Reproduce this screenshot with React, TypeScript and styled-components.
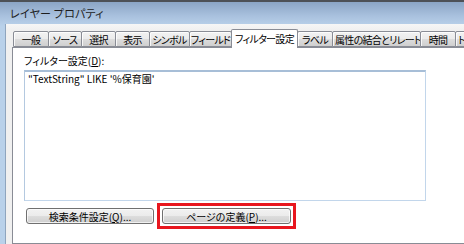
import React from 'react';
import styled, { createGlobalStyle } from 'styled-components';

const GlobalStyle = createGlobalStyle`
  html, body {
    margin: 0;
    padding: 0;
    width: 464px;
    height: 244px;
    overflow: hidden;
    background: #f0f0f0;
  }
  body {
    font-family: "Noto Sans CJK JP", "Liberation Sans", sans-serif;
    font-feature-settings: "palt" 1;
    font-size: 10px;
    color: #000;
  }
`;

// Window frame with Aero basic style title bar
const Frame = styled.div`
  width: 464px;
  height: 244px;
  box-sizing: border-box;
  border-top: 2px solid #4d5157;
  background: linear-gradient(to bottom, #8ba5c5 0px, #a9c1de 14px, #b9d1ea 24px, #b9d1ea 100%);
  display: flex;
  flex-direction: column;
  overflow: hidden;
`;

const TitleBar = styled.div`
  height: 22px;
  flex: none;
  display: flex;
  align-items: center;
  padding-left: 10px;
  font-size: 11px;
  letter-spacing: 0.2px;
  color: #1e1e1e;
`;

const Client = styled.div`
  flex: 1;
  margin-left: 5px;
  border-left: 1px solid #8fa5be;
  background: linear-gradient(to bottom, #f6f6f6 0px, #f0f0f0 6px);
  padding: 5px 0 0 6px;
  display: flex;
  flex-direction: column;
  min-width: 0;
`;

const TabStrip = styled.div`
  display: flex;
  align-items: flex-end;
  padding-left: 2px;
  position: relative;
  z-index: 1;
  white-space: nowrap;
`;

const Tab = styled.div<{ $w: number; $active?: boolean }>`
  flex: none;
  width: ${p => p.$w}px;
  box-sizing: border-box;
  height: ${p => (p.$active ? 19 : 16)}px;
  margin-left: -1px;
  margin-bottom: ${p => (p.$active ? -1 : 0)}px;
  padding: 0 2px ${p => (p.$active ? 2 : 0)}px;
  border: 1px solid #898c95;
  border-bottom: ${p => (p.$active ? 'none' : '1px solid #898c95')};
  border-radius: 2px 2px 0 0;
  background: ${p =>
    p.$active
      ? '#ffffff'
      : 'linear-gradient(to bottom, #f2f2f2 0%, #ebebeb 50%, #dddddd 51%, #cfcfcf 100%)'};
  box-shadow: inset 1px 1px 0 rgba(255, 255, 255, 0.8);
  display: flex;
  align-items: center;
  justify-content: ${p => (p.$w > 45 && !p.$active ? 'flex-start' : 'center')};
  font-size: 10px;
  letter-spacing: -0.7px;
  line-height: 13px;
  overflow: hidden;
  position: relative;
  z-index: ${p => (p.$active ? 2 : 0)};
`;

const Panel = styled.div`
  width: 480px;
  flex: 1;
  box-sizing: border-box;
  background: #ffffff;
  border: 1px solid #898c95;
  padding: 6px 0 0 11px;
  display: flex;
  flex-direction: column;
`;

const FieldLabel = styled.div`
  height: 14px;
  line-height: 14px;
  margin-bottom: 2px;
`;

const FilterBox = styled.div`
  width: 402px;
  height: 131px;
  box-sizing: border-box;
  border: 1px solid #c2d6eb;
  border-top: 2px solid #a7bed7;
  border-left-color: #b4c9e0;
  padding: 0 3px;
  line-height: 13px;
`;

const ButtonRow = styled.div`
  display: flex;
  align-items: center;
  gap: 3px;
  margin-top: 2px;
  padding-left: 2px;
`;

const Highlight = styled.div`
  border: 3px solid #e8161e;
  padding: 2px;
  display: flex;
`;

const Button = styled.div<{ $w: number }>`
  width: ${p => p.$w}px;
  height: 16px;
  box-sizing: border-box;
  border: 1px solid #707070;
  border-radius: 3px;
  background: linear-gradient(to bottom, #f2f2f2 0%, #ebebeb 50%, #dddddd 51%, #cfcfcf 100%);
  box-shadow: inset 0 0 0 1px rgba(255, 255, 255, 0.7);
  display: flex;
  align-items: center;
  justify-content: center;
  line-height: 13px;
`;

const tabs: { label: string; w: number; active?: boolean }[] = [
  { label: '一般', w: 36 },
  { label: 'ソース', w: 34 },
  { label: '選択', w: 35 },
  { label: '表示', w: 35 },
  { label: 'シンボル', w: 41 },
  { label: 'フィールド', w: 43 },
  { label: 'フィルター設定', w: 67, active: true },
  { label: 'ラベル', w: 36 },
  { label: '属性の結合とリレート', w: 89 },
  { label: '時間', w: 36 },
  { label: 'トポロジ', w: 50 },
];

export default function App() {
  return (
    <>
      <GlobalStyle />
      <Frame>
        <TitleBar>レイヤー プロパティ</TitleBar>
        <Client>
          <TabStrip>
            {tabs.map(t => (
              <Tab key={t.label} $w={t.w} $active={t.active}>
                {t.label}
              </Tab>
            ))}
          </TabStrip>
          <Panel>
            <FieldLabel>
              フィルター設定(<u>D</u>):
            </FieldLabel>
            <FilterBox>"TextString" LIKE '%保育園'</FilterBox>
            <ButtonRow>
              <Button $w={128}>
                検索条件設定(<u>Q</u>)...
              </Button>
              <Highlight>
                <Button $w={129}>
                  ページの定義(<u>P</u>)...
                </Button>
              </Highlight>
            </ButtonRow>
          </Panel>
        </Client>
      </Frame>
    </>
  );
}
